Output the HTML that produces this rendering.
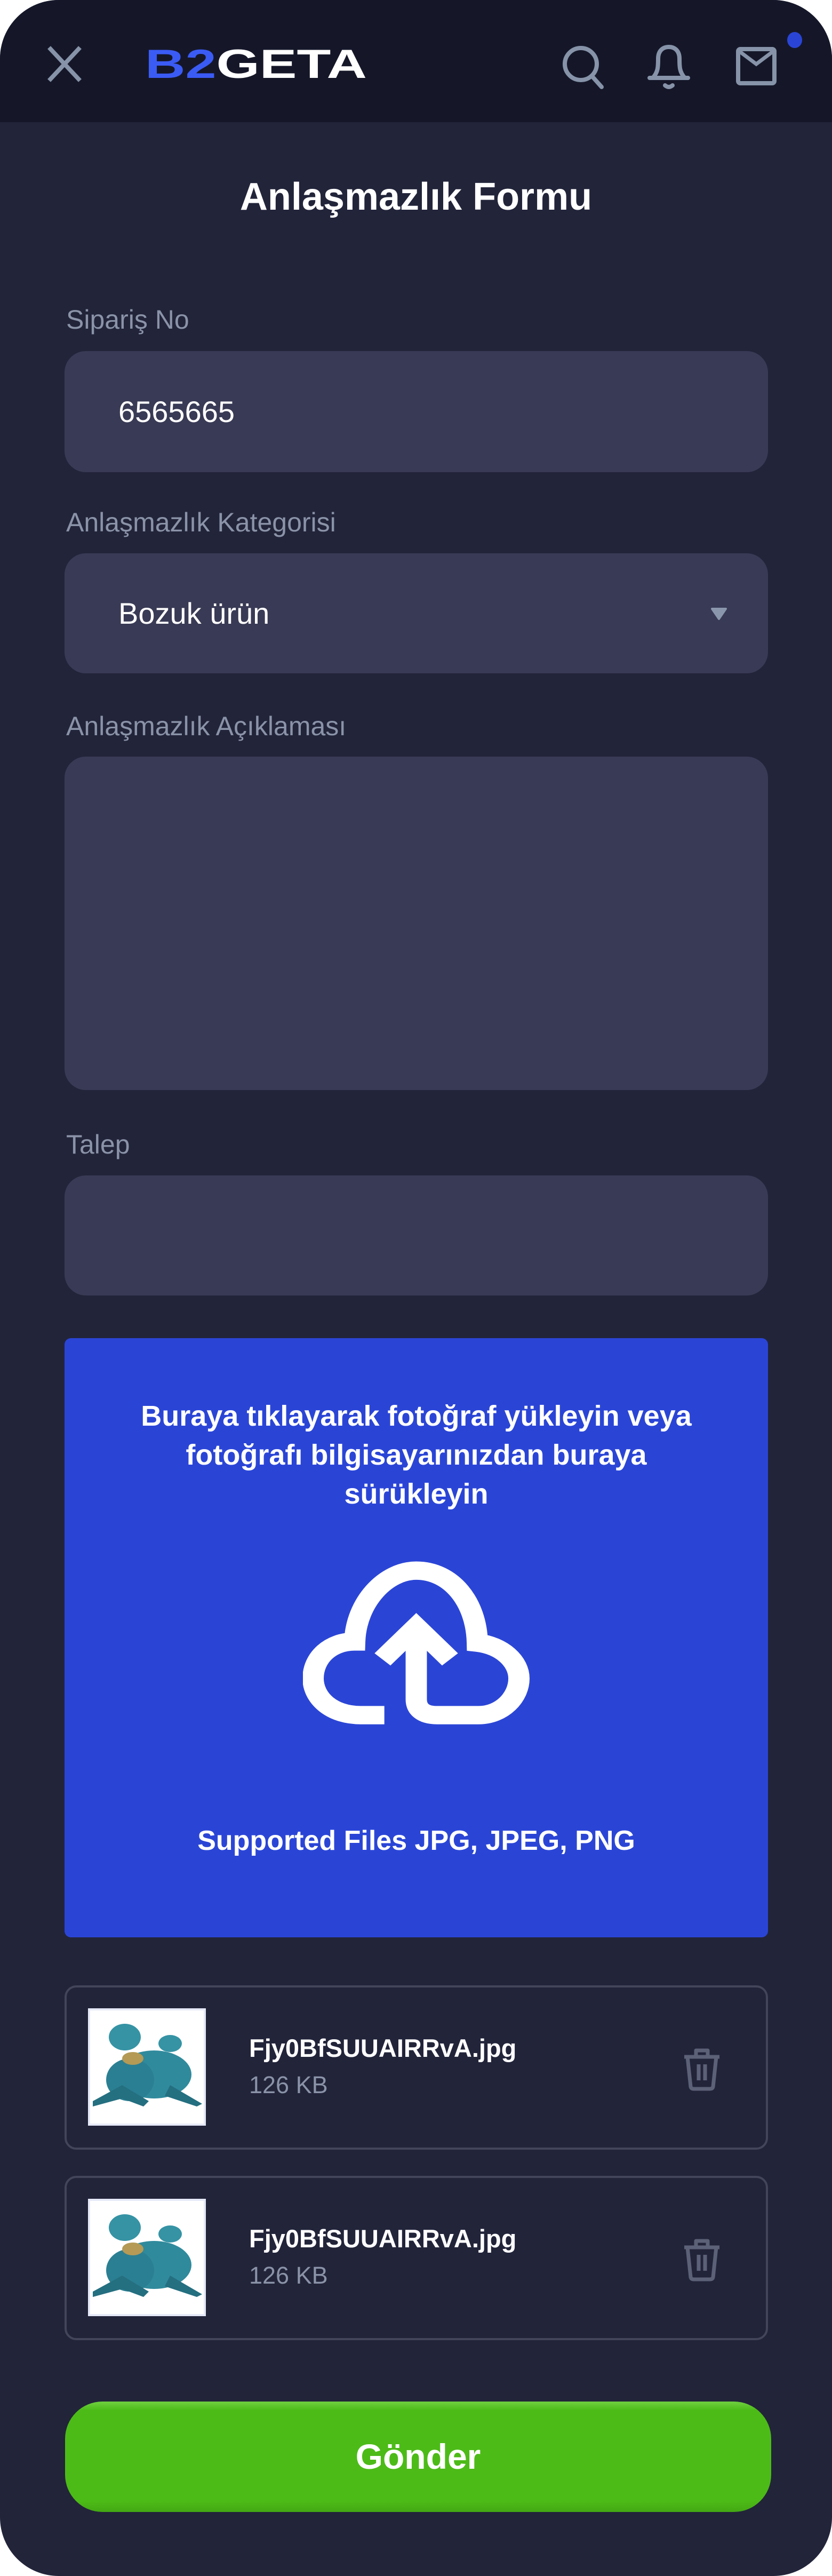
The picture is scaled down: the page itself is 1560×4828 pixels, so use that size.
<!DOCTYPE html>
<html><head><meta charset="utf-8">
<style>
*{margin:0;padding:0;box-sizing:border-box}
html,body{width:1560px;height:4828px;background:#fff;overflow:hidden}
body{font-family:"Liberation Sans",sans-serif;position:relative}
.page{position:absolute;left:0;top:0;width:1560px;height:4828px;background:#22243a;border-radius:110px;overflow:hidden}
.hdr{position:absolute;left:0;top:0;width:1560px;height:229px;background:#151729}
.abs{position:absolute}
.title{position:absolute;left:0;width:1560px;top:328px;text-align:center;color:#fff;font-size:72px;font-weight:bold;}
.lbl{position:absolute;left:124px;color:#8a93a8;font-size:50px}
.inp{position:absolute;left:121px;width:1319px;background:#393a55;border-radius:40px;color:#fff;font-size:56px;padding-left:101px}
.upload{position:absolute;left:121px;top:2508px;width:1319px;height:1123px;background:#2a45d6;border-radius:12px;color:#fff;text-align:center}
.file{position:absolute;left:121px;width:1319px;height:308px;border:4px solid #43455a;border-radius:22px}
.thumb{position:absolute;left:40px;top:39px;width:221px;height:220px;background:#fff;border:4px solid #e6eaf8}
.fn{position:absolute;left:342px;top:86px;color:#fff;font-size:47px;font-weight:bold}
.fs{position:absolute;left:342px;top:157px;color:#8a93a8;font-size:45px}
.btn{position:absolute;left:122px;top:4501px;width:1324px;height:207px;border-radius:70px;background:linear-gradient(#6fd040 0,#4cbb17 8%,#4cbb17 90%,#44a814 100%);color:#fff;font-size:66px;font-weight:bold;text-align:center;line-height:207px}
</style></head><body>
<div class="page">
<div class="hdr">
<svg class="abs" style="left:85px;top:84px" width="72" height="72" viewBox="0 0 72 72"><path d="M7 5L65 67M65 5L7 67" stroke="#8693a8" stroke-width="8"/></svg>
<svg class="abs" style="left:270px;top:86px" width="420" height="64" viewBox="0 0 420 64">
<text x="2" y="60" font-family="Liberation Sans,sans-serif" font-weight="bold" font-size="76" textLength="416" lengthAdjust="spacingAndGlyphs"><tspan fill="#3b5bf5">B2</tspan><tspan fill="#fff">GETA</tspan></text></svg>
<svg class="abs" style="left:1050px;top:80px" width="100" height="100" viewBox="0 0 100 100"><circle cx="39" cy="40" r="30" fill="none" stroke="#8693a8" stroke-width="8"/><path d="M62 65L78 83" stroke="#8693a8" stroke-width="8" stroke-linecap="round"/></svg>
<svg class="abs" style="left:1210px;top:80px" width="90" height="90" viewBox="0 0 90 90"><path d="M8 66H80M14 66C24 55 24 45 24 30C24 16 32 8 44 8C56 8 64 16 64 30C64 45 64 55 74 66" fill="none" stroke="#8693a8" stroke-width="8" stroke-linejoin="round" stroke-linecap="round"/><path d="M37 80Q44 86 51 80" fill="none" stroke="#8693a8" stroke-width="8" stroke-linecap="round"/></svg>
<svg class="abs" style="left:1376px;top:84px" width="90" height="80" viewBox="0 0 90 80"><rect x="8" y="8" width="68" height="64" rx="4" fill="none" stroke="#8693a8" stroke-width="8"/><path d="M10 12L42 36L74 12" fill="none" stroke="#8693a8" stroke-width="7"/></svg>
<div class="abs" style="left:1476px;top:60px;width:28px;height:30px;border-radius:50%;background:#2a45d6"></div>
</div>
<div class="title">Anlaşmazlık Formu</div>
<div class="lbl" style="top:570px">Sipariş No</div>
<div class="inp" style="top:658px;height:227px;line-height:227px">6565665</div>
<div class="lbl" style="top:950px">Anlaşmazlık Kategorisi</div>
<div class="inp" style="top:1037px;height:225px;line-height:225px">Bozuk ürün</div>
<svg class="abs" style="left:1330px;top:1138px" width="36" height="28" viewBox="0 0 36 28"><path d="M5 3H31L18 22Z" fill="#8a96ac" stroke="#8a96ac" stroke-width="4" stroke-linejoin="round"/></svg>
<div class="lbl" style="top:1332px">Anlaşmazlık Açıklaması</div>
<div class="inp" style="top:1418px;height:625px"></div>
<div class="lbl" style="top:2116px">Talep</div>
<div class="inp" style="top:2203px;height:225px"></div>
<div class="upload">
<div style="position:absolute;left:0;width:100%;top:110px;font-size:54px;font-weight:bold;line-height:73px">Buraya tıklayarak fotoğraf yükleyin veya<br>fotoğrafı bilgisayarınızdan buraya<br>sürükleyin</div>
<svg class="abs" style="left:447px;top:417px" width="425" height="309" viewBox="0 0 425 309">
<g transform="scale(0.8673,0.7463) translate(-540,-597)" fill="none" stroke="#fff" stroke-width="46">
<path d="M716 985L665 985C600 985 562 940 562 893C562 840 600 800 652 800C655 700 720 622 785 622C860 622 915 700 917 803C970 810 1007 850 1007 893C1007 940 970 985 920 985L830 985C800 985 785 970 785 945L785 770"/>
<path d="M712 845L785 763L858 845" stroke-linejoin="miter"/>
</g></svg>
<div style="position:absolute;left:0;width:100%;top:912px;font-size:52px;font-weight:bold">Supported Files JPG, JPEG, PNG</div>
</div>
<div class="file" style="top:3721px">
<div class="thumb"><svg width="213" height="212" viewBox="0 0 213 212"><ellipse cx="120" cy="120" rx="70" ry="45" fill="#2f8a9c"/><ellipse cx="75" cy="130" rx="45" ry="40" fill="#2b7f92"/><ellipse cx="65" cy="50" rx="30" ry="25" fill="#3593a4"/><ellipse cx="150" cy="62" rx="22" ry="16" fill="#3593a4"/><path d="M5 170L60 140L110 170L100 180L60 165L5 180Z" fill="#246f80"/><path d="M150 140L210 175L200 180L140 160Z" fill="#246f80"/><ellipse cx="80" cy="90" rx="20" ry="12" fill="#b49a55"/></svg></div>
<div class="fn">Fjy0BfSUUAIRRvA.jpg</div>
<div class="fs">126 KB</div>
<svg class="abs" style="left:1154px;top:112px" width="74" height="82" viewBox="0 0 74 82"><path d="M4 18H70M26 18V6H48V18M10 18L16 74Q17 78 22 78H52Q57 78 58 74L64 18M31 32V62M43 32V62" fill="none" stroke="#5c6178" stroke-width="7" stroke-linejoin="round"/></svg>
</div>
<div class="file" style="top:4078px">
<div class="thumb"><svg width="213" height="212" viewBox="0 0 213 212"><ellipse cx="120" cy="120" rx="70" ry="45" fill="#2f8a9c"/><ellipse cx="75" cy="130" rx="45" ry="40" fill="#2b7f92"/><ellipse cx="65" cy="50" rx="30" ry="25" fill="#3593a4"/><ellipse cx="150" cy="62" rx="22" ry="16" fill="#3593a4"/><path d="M5 170L60 140L110 170L100 180L60 165L5 180Z" fill="#246f80"/><path d="M150 140L210 175L200 180L140 160Z" fill="#246f80"/><ellipse cx="80" cy="90" rx="20" ry="12" fill="#b49a55"/></svg></div>
<div class="fn">Fjy0BfSUUAIRRvA.jpg</div>
<div class="fs">126 KB</div>
<svg class="abs" style="left:1154px;top:112px" width="74" height="82" viewBox="0 0 74 82"><path d="M4 18H70M26 18V6H48V18M10 18L16 74Q17 78 22 78H52Q57 78 58 74L64 18M31 32V62M43 32V62" fill="none" stroke="#5c6178" stroke-width="7" stroke-linejoin="round"/></svg>
</div>
<div class="btn">Gönder</div>
</div>
</body></html>
